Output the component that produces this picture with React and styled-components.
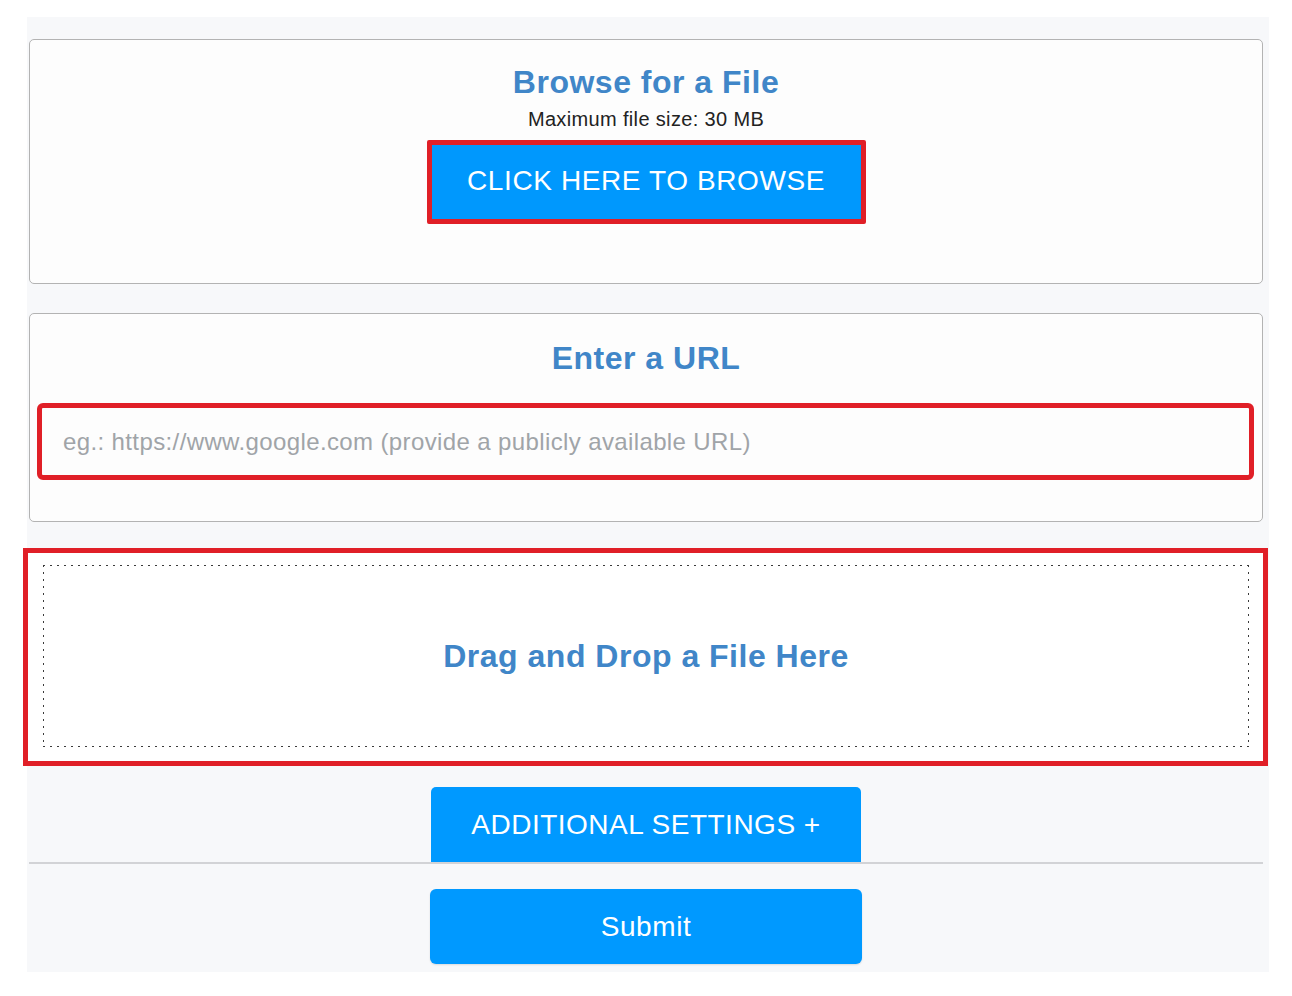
import React from "react";
import styled, { createGlobalStyle } from "styled-components";

const Global = createGlobalStyle`
  html, body { margin: 0; padding: 0; background: #ffffff; }
  body { font-family: "Liberation Sans", Arial, sans-serif; }
  * { box-sizing: border-box; }
`;

const Panel = styled.div`
  margin: 17px 0 0 27px;
  width: 1242px;
  background: #f7f8fa;
  padding: 22px 6px 8px 2px;
  display: flex;
  flex-direction: column;
`;

const Card = styled.section`
  background: #fdfdfd;
  border: 1px solid #b3b3b3;
  border-radius: 5px;
  display: flex;
  flex-direction: column;
  align-items: ${(p) => (p.$stretch ? "stretch" : "center")};
  padding: ${(p) => p.$pad};
  margin-bottom: ${(p) => p.$mb || "0"};
`;

const Title = styled.h2`
  margin: 0;
  font-family: "Liberation Sans", Arial, sans-serif;
  font-weight: 700;
  font-size: 32px;
  line-height: 38px;
  letter-spacing: 0.5px;
  color: #4086c8;
  text-align: center;
`;

const Note = styled.div`
  margin-top: 6px;
  font-size: 20px;
  line-height: 24px;
  letter-spacing: 0.35px;
  color: #222;
  text-align: center;
`;

const BrowseButton = styled.button`
  margin-top: 9px;
  width: 439px;
  height: 84px;
  border: 5px solid #e01f27;
  border-radius: 2px;
  background: #0098fd;
  color: #ffffff;
  font-family: "Liberation Sans", Arial, sans-serif;
  font-size: 28px;
  letter-spacing: 0.6px;
  padding: 0 0 2px 0;
  cursor: pointer;
`;

const UrlInput = styled.input`
  margin: 26px 8px 0 7px;
  height: 77px;
  border: 5px solid #e01f27;
  border-radius: 6px;
  background: #fdfdfd;
  padding: 0 0 0 21px;
  font-family: "Liberation Sans", Arial, sans-serif;
  font-size: 24px;
  letter-spacing: 0.38px;
  color: #333;
  outline: none;
  &::placeholder { color: #a0a4a8; }
`;

const DropZone = styled.div`
  margin: 26px -5px 0 -6px;
  height: 218px;
  border: 5px solid #e01f27;
  background: #ffffff;
  padding: 12px 14px 14px 15px;
  display: flex;
`;

const DottedArea = styled.div`
  flex: 1;
  display: flex;
  align-items: center;
  justify-content: center;
  background:
    linear-gradient(to right, #3a3a3a 2px, transparent 2px) left top / 7px 1px repeat-x,
    linear-gradient(to right, #3a3a3a 2px, transparent 2px) left bottom / 7px 1px repeat-x,
    linear-gradient(to bottom, #3a3a3a 2px, transparent 2px) left top / 1px 7px repeat-y,
    linear-gradient(to bottom, #3a3a3a 2px, transparent 2px) right top / 1px 7px repeat-y;
`;

const TabBar = styled.div`
  margin-top: 21px;
  display: flex;
  justify-content: center;
  border-bottom: 2px solid #d2d3d6;
`;

const BlueButton = styled.button`
  width: ${(p) => p.$w}px;
  height: 75px;
  border: none;
  border-radius: ${(p) => p.$radius};
  background: #0099ff;
  color: #ffffff;
  font-family: "Liberation Sans", Arial, sans-serif;
  font-size: 28px;
  letter-spacing: ${(p) => p.$ls || "0.5px"};
  padding: 0;
  cursor: pointer;
  box-shadow: ${(p) => (p.$shadow ? "0 1px 2px rgba(0,0,0,0.12)" : "none")};
`;

const SubmitRow = styled.div`
  margin-top: 25px;
  display: flex;
  justify-content: center;
`;

export default function App() {
  return (
    <>
      <Global />
      <Panel>
        <Card $pad="23px 0 59px 0" $mb="29px">
          <Title>Browse for a File</Title>
          <Note>Maximum file size: 30 MB</Note>
          <BrowseButton>CLICK HERE TO BROWSE</BrowseButton>
        </Card>
        <Card $stretch $pad="25px 0 41px 0">
          <Title>Enter a URL</Title>
          <UrlInput placeholder="eg.: https://www.google.com (provide a publicly available URL)" />
        </Card>
        <DropZone>
          <DottedArea>
            <Title>Drag and Drop a File Here</Title>
          </DottedArea>
        </DropZone>
        <TabBar>
          <BlueButton $w={430} $radius="5px 5px 0 0">ADDITIONAL SETTINGS +</BlueButton>
        </TabBar>
        <SubmitRow>
          <BlueButton $w={432} $radius="6px" $ls="0.6px" $shadow>Submit</BlueButton>
        </SubmitRow>
      </Panel>
    </>
  );
}
